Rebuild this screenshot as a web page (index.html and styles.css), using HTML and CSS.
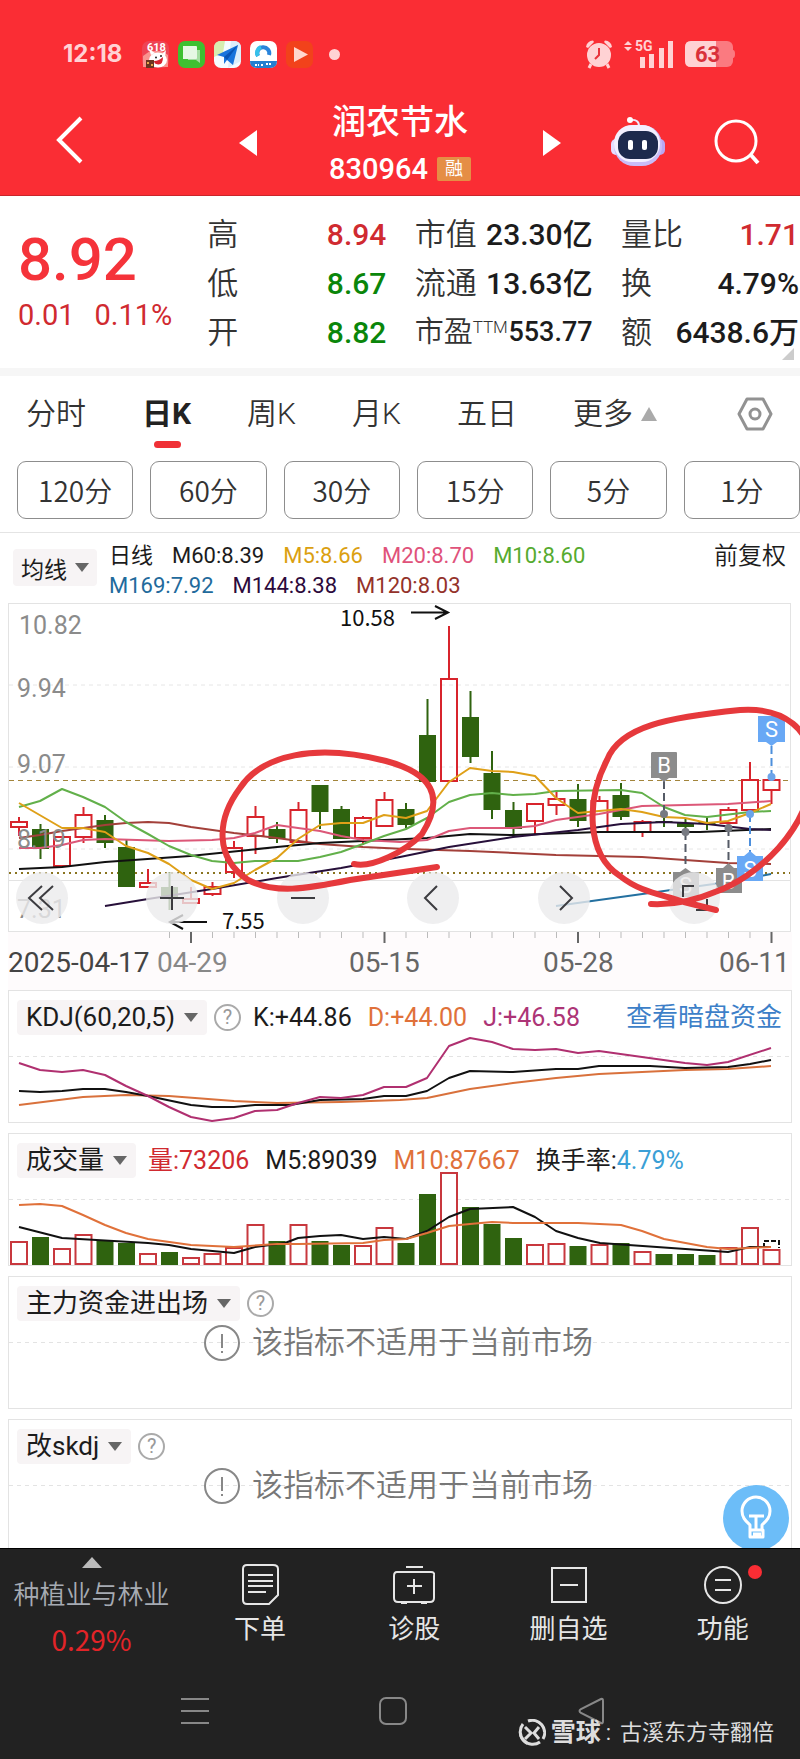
FILE: index.html
```html
<!DOCTYPE html>
<html lang="zh-CN">
<head>
<meta charset="utf-8">
<meta name="viewport" content="width=device-width, initial-scale=1">
<title>润农节水 830964</title>
<link rel="stylesheet" href="styles.css">
</head>
<body>
<header class="top">
  <div class="status">
    <time class="clock">12:18</time>
    <div class="apps">
      <svg viewBox="0 0 27 27"><rect width="27" height="27" rx="7" fill="#ee4454"/><path d="M1 15L8 10L20 10L26 14V26H1Z" fill="#f9938f"/><text x="5" y="10" font-size="11" font-weight="700" fill="#fff" class="num">618</text><ellipse cx="16" cy="19" rx="9" ry="7.500" fill="#fff"/><path d="M9 14L7 8L13 12M20 13L24 9L23 16" fill="#fff"/><path d="M12 20Q17 20 21 16Q21 24 16 23.500Q12 23 12 20" fill="#d8232f"/><circle cx="14" cy="16.500" r="1" fill="#222"/><circle cx="19" cy="15" r="1" fill="#222"/><rect x="4" y="19" width="8" height="8" fill="#6b3522"/><path d="M5 21h2v2H5zM9 23h2v2H9z" fill="#e8a64b"/></svg>
      <svg viewBox="0 0 27 27"><rect width="27" height="27" rx="7" fill="#3ec031"/><path d="M10 9H22V22L18 19H10Z" fill="#a4dda0"/><path d="M5 5H18Q19 5 19 6V17Q19 18 18 18H5Z" fill="#e6f8e4"/></svg>
      <svg viewBox="0 0 27 27"><rect width="27" height="27" rx="7" fill="#f5fbff"/><path d="M7 0H11L9 12L0 16V7Q0 0 7 0" fill="#d7edb0"/><path d="M17 0H20Q27 0 27 7V20L14 27" fill="#dceefb"/><path d="M3 14L24 4L19 24L13 19L10 23V16Z" fill="#1874dc"/><path d="M10 16L24 4L13 19Z" fill="#0754b5"/></svg>
      <svg viewBox="0 0 27 27"><rect width="27" height="27" rx="7" fill="#fff"/><path d="M8 15A6 6 0 1 1 19 14" fill="none" stroke="#2a84db" stroke-width="4"/><path d="M8 15A6 6 0 0 1 11 6" fill="none" stroke="#35c1ea" stroke-width="4"/><path d="M0 20H27Q27 27 20 27H7Q0 27 0 20" fill="#237fd0"/><path d="M5 24H9M11 24H14M16 23H22" stroke="#fff" stroke-width="2" stroke-dasharray="2 1"/></svg>
      <svg viewBox="0 0 27 27"><rect width="27" height="27" rx="7" fill="#f2421b"/><path d="M8 6V21L22 13.500Z" fill="#ffd9ce"/></svg>
      <span class="more-dot"></span>
    </div>
    <div class="signals">
      <svg width="28" height="30" viewBox="0 0 28 30" fill="#ffd2d4"><circle cx="14" cy="16" r="12"/><path d="M1 8Q2 2 8 1.500L9 3L3 9ZM27 8Q26 2 20 1.500L19 3L25 9Z"/><path d="M6 25L4 29M22 25L24 29" stroke="#ffd2d4" stroke-width="3"/><path d="M14 9V16L10 20" fill="none" stroke="#e9323b" stroke-width="2"/></svg>
      <svg width="50" height="30" viewBox="0 0 50 30" fill="#ffd2d4"><path d="M0 6L4 2L8 6ZM0 8H8L4 12Z"/><text x="11" y="12" class="num" font-size="14" font-weight="700">5G</text><path d="M16 18H21V29H16ZM25 15H30V29H25ZM35 9H40V29H35ZM44 2H49V29H44Z"/></svg>
      <svg width="50" height="28" viewBox="0 0 50 28"><rect width="48" height="26" y="1" rx="6" fill="#fb7a80"/><path d="M6 1H31V27H6Q0 27 0 21V7Q0 1 6 1" fill="#ffd2d4"/><path d="M48 10Q50 10 50 14Q50 18 48 18Z" fill="#fb7a80"/><text x="10" y="22" class="num" font-size="22" font-weight="700" fill="#d9303a">63</text></svg>
    </div>
  </div>
  <div class="titlebar">
    <button class="icon-btn back" aria-label="返回"><svg width="27" height="48" viewBox="0 0 27 48"><path d="M25 2L3 24L25 46" fill="none" stroke="#fff" stroke-width="4"/></svg></button>
    <div class="switcher">
      <button class="icon-btn" aria-label="上一只"><svg width="18" height="28" viewBox="0 0 18 28"><path d="M18 1V27L0 14Z" fill="#fff"/></svg></button>
      <div class="stock"><h1>润农节水</h1><p><span>830964</span><em>融</em></p></div>
      <button class="icon-btn" aria-label="下一只"><svg width="18" height="28" viewBox="0 0 18 28"><path d="M0 1V27L18 14Z" fill="#fff"/></svg></button>
    </div>
    <div class="actions">
      <button class="icon-btn" aria-label="智能助手"><svg width="54" height="50" viewBox="0 0 54 50"><path d="M19 3Q28 2 28 9" fill="none" stroke="#eeeaff" stroke-width="2"/><circle cx="19" cy="3" r="3" fill="#fff"/><rect x="0" y="22" width="10" height="16" rx="5" fill="#e5ddff"/><rect x="44" y="22" width="10" height="16" rx="5" fill="#b9a7f3"/><rect x="3" y="8" width="48" height="41" rx="20" fill="#c9bcf7"/><rect x="3" y="8" width="46" height="37" rx="18" fill="#f3f0ff"/><rect x="7" y="14" width="40" height="28" rx="12" fill="#1d2a4d"/><rect x="17" y="23" width="5" height="10" rx="2" fill="#fff"/><rect x="31" y="23" width="5" height="10" rx="2" fill="#fff"/></svg></button>
      <button class="icon-btn" aria-label="搜索"><svg width="46" height="46" viewBox="0 0 46 46" fill="none" stroke="#fff" stroke-width="3"><circle cx="22" cy="22" r="20"/><path d="M36 35L44 44" stroke-width="4"/></svg></button>
    </div>
  </div>
</header>

<section class="quote">
  <div class="price"><strong>8.92</strong><p><span>0.01</span><span>0.11%</span></p></div>
  <dl>
    <div><dt>高</dt><dd class="up">8.94</dd></div>
    <div><dt>低</dt><dd class="down">8.67</dd></div>
    <div><dt>开</dt><dd class="down">8.82</dd></div>
  </dl>
  <dl>
    <div><dt>市值</dt><dd>23.30亿</dd></div>
    <div><dt>流通</dt><dd>13.63亿</dd></div>
    <div><dt class="tight">市盈<small>TTM</small></dt><dd class="tight">553.77</dd></div>
  </dl>
  <dl>
    <div><dt>量比</dt><dd class="up">1.71</dd></div>
    <div><dt>换</dt><dd>4.79%</dd></div>
    <div><dt>额</dt><dd>6438.6万</dd></div>
  </dl>
  <span class="corner"></span>
</section>

<nav class="tabs">
  <button>分时</button><button class="active">日K</button><button>周K</button><button>月K</button><button>五日</button>
  <button>更多<svg width="16" height="14" viewBox="0 0 16 14"><path d="M0 14L8 0L16 14Z" fill="#aaa"/></svg></button>
  <button class="gear" aria-label="设置"><svg width="36" height="34" viewBox="0 0 36 34" fill="none" stroke="#929292" stroke-width="3" stroke-linejoin="round"><path d="M10 2H26L34 17L26 32H10L2 17Z"/><circle cx="18" cy="17" r="5"/></svg></button>
</nav>
<nav class="periods">
  <button>120分</button><button>60分</button><button>30分</button><button>15分</button><button>5分</button><button>1分</button>
</nav>

<section class="legend">
  <button class="pick">均线<i class="caret"></i></button>
  <div class="averages">
    <p><span>日线</span><span>M60:8.39</span><span class="c-m5">M5:8.66</span><span class="c-m20">M20:8.70</span><span class="c-m10">M10:8.60</span></p>
    <p><span class="c-m169">M169:7.92</span><span class="c-m144">M144:8.38</span><span class="c-m120">M120:8.03</span></p>
  </div>
  <button class="adjust">前复权</button>
</section>

<section class="kline">
  <svg class="plot" viewBox="0 603 800 387" role="img" aria-label="日K线图">
    <rect x="8" y="932" width="784" height="58" fill="#fefbfc"/>
    <g fill="none" stroke="#e3e3e3"><rect x="8.500" y="603.500" width="782" height="328"/><path d="M8 880.500H791"/></g>
    <path d="M9 685H790M9 767H790M9 849H790" stroke="#e6e6e6" stroke-dasharray="4 4"/>
    <path d="M9 780.500H790" stroke="#a3853c" stroke-dasharray="5 4"/>
    <path d="M9 873H790" stroke="#8a7420" stroke-width="2" stroke-dasharray="2 4"/>
    <path id="ticks" stroke="#bbb"/>
    <path d="M191 932V943M384.500 932V943M578 932V943M771.500 932V943" stroke="#666" stroke-width="2"/>
    <g id="candles"></g>
    <g id="averages"></g>
    <g class="axis"><text x="19" y="634">10.82</text><text x="17" y="697">9.94</text><text x="17" y="773">9.07</text><text x="17" y="848">8.19</text><text x="17" y="918">7.31</text></g>
    <g class="note"><text x="340" y="626">10.58</text><text x="222" y="929">7.55</text></g>
    <path d="M411 612.500H448M435 606L448 612.500L435 619M207 922H171M183 915L170 922L183 929" fill="none" stroke="#111" stroke-width="2"/>
    <g class="dates"><text x="8" y="972" fill="#444">2025-04-17</text><text x="157" y="972" fill="#888">04-29</text><text x="349" y="972">05-15</text><text x="543" y="972">05-28</text><text x="719" y="972">06-11</text></g>
    <g fill="none" stroke="#555b66" stroke-width="2" stroke-dasharray="8 4"><path d="M664 781V812M685.500 832V868M728.500 828V863"/><path d="M771.500 746V774M750 814V852" stroke="#4d8fdc"/></g>
    <g fill="#777a82"><circle cx="664" cy="814" r="4"/><circle cx="685.500" cy="832" r="4"/><circle cx="728.500" cy="828" r="4"/></g>
    <g fill="#6ba4ea"><circle cx="771.500" cy="777" r="4"/><circle cx="750" cy="814" r="4"/></g>
    <path d="M652 752H676Q677 752 677 753V778H669L664 782L659 778H651V753Z" fill="#8c8c8c"/>
    <path d="M673 872H680L685.500 868L691 872H699V897H673Z" fill="#8c8c8c"/>
    <path d="M716 868H723L728.500 863L734 868H742V893H716Z" fill="#8c8c8c"/>
    <path d="M737 856H744L750 851L756 856H763V881H737Z" fill="#68a8f5"/>
    <path d="M758 716H785V742H777L771.500 746L766 742H758Z" fill="#68a8f5"/>
    <g class="mark"><text x="664" y="773">B</text><text x="685.500" y="893">S</text><text x="728.500" y="889">B</text><text x="750" y="877">S</text><text x="771.500" y="737">S</text></g>
  </svg>
  <div class="controls">
    <button aria-label="最早"><svg viewBox="0 0 52 52"><path d="M26 14L13 26L26 38M37 14L24 26L37 38"/></svg></button>
    <button aria-label="放大"><svg viewBox="0 0 52 52"><path d="M14 26H38M26 14V38"/></svg></button>
    <button aria-label="缩小"><svg viewBox="0 0 52 52"><path d="M14 26H38"/></svg></button>
    <button aria-label="左移"><svg viewBox="0 0 52 52"><path d="M30 14L18 26L30 38"/></svg></button>
    <button aria-label="右移"><svg viewBox="0 0 52 52"><path d="M22 14L34 26L22 38"/></svg></button>
    <button aria-label="全屏"><svg viewBox="0 0 52 52"><path d="M15 25V14H26M39 27V38H28"/></svg></button>
  </div>
  <svg class="plot ink" viewBox="0 603 800 387" aria-hidden="true" fill="none" stroke="#e6393c" stroke-width="6" stroke-linecap="round">
    <path d="M354 864C372 868 405 852 422 834C446 796 431 773 386 761C315 743 262 755 240 788C216 820 215 858 248 880C275 894 305 889 350 880L437 867"/>
    <path d="M716 910L684 902C660 894 640 892 620 876C586 854 586 800 607 760C620 726 670 717 740 710C785 707 812 730 812 768C812 830 755 878 715 892C694 901 674 905 651 904"/>
  </svg>
</section>

<main class="panels">
  <section class="panel">
    <svg class="plot" viewBox="9 991 782 131" role="img" aria-label="KDJ指标"><path d="M9 1056.500H790" class="mid"/><g id="kdj"></g></svg>
    <div class="head"><button class="pick">KDJ(60,20,5)<i class="caret"></i></button><button class="help" aria-label="说明">?</button>
      <p class="vals"><span>K:+44.86</span><span class="c-or">D:+44.00</span><span class="c-j">J:+46.58</span></p><a href="#dark">查看暗盘资金</a></div>
  </section>
  <section class="panel">
    <svg class="plot" viewBox="9 1134 782 131" role="img" aria-label="成交量"><path d="M9 1199.500H790" class="mid"/><g id="volume"></g><path d="M764 1248V1241H779V1248" fill="none" stroke="#111" stroke-width="2" stroke-dasharray="5 2"/><g id="volavg"></g></svg>
    <div class="head"><button class="pick">成交量<i class="caret"></i></button>
      <p class="vals"><span class="up">量:73206</span><span>M5:89039</span><span class="c-or">M10:87667</span><span>换手率:<b>4.79%</b></span></p></div>
  </section>
  <section class="panel">
    <svg class="plot" viewBox="9 1277 782 131"><path d="M9 1342.500H790" class="mid"/></svg>
    <div class="head"><button class="pick">主力资金进出场<i class="caret"></i></button><button class="help" aria-label="说明">?</button></div>
    <p class="notice"><svg width="36" height="36" viewBox="0 0 36 36"><circle cx="18" cy="18" r="17"/><path d="M18 9V23M18 26V28"/></svg><span>该指标不适用于当前市场</span></p>
  </section>
  <section class="panel last">
    <svg class="plot" viewBox="9 1420 782 128"><path d="M9 1485.500H790" class="mid"/></svg>
    <div class="head"><button class="pick">改skdj<i class="caret"></i></button><button class="help" aria-label="说明">?</button></div>
    <p class="notice"><svg width="36" height="36" viewBox="0 0 36 36"><circle cx="18" cy="18" r="17"/><path d="M18 9V23M18 26V28"/></svg><span>该指标不适用于当前市场</span></p>
  </section>
  <button class="fab" aria-label="提示"><svg width="66" height="66" viewBox="0 0 66 66" fill="none" stroke="#fff" stroke-width="3" stroke-linejoin="round"><path d="M27 45V40C23 36 19 33 19 26A14 14 0 0 1 47 26C47 33 43 36 39 40V45M26 31H41M33 31V45M27 45H40V52H27ZM30 49H38"/></svg></button>
</main>

<footer class="bottom">
  <nav class="toolbar">
    <button class="sector"><svg width="20" height="11" viewBox="0 0 20 11"><path d="M0 11L10 0L20 11Z"/></svg><span>种植业与林业</span><b>0.29%</b></button>
    <button><svg width="42" height="42" viewBox="0 0 42 42"><path d="M8 1H34Q39 1 39 5V31L30 40H8Q4 40 4 36V5Q4 1 8 1ZM9 11H34M9 17H34M9 22H34M9 28H27"/></svg>下单</button>
    <button><svg width="42" height="42" viewBox="0 0 42 42"><path d="M13 3H30M4 8H38Q42 8 41 12V34Q41 38 37 38H5Q1 38 1 34V12Q1 8 4 8ZM21 15V30M14 22H29M8 39H14M28 39H34"/></svg>诊股</button>
    <button><svg width="42" height="42" viewBox="0 0 42 42"><path d="M4 4H38V38H4ZM12 21H30"/></svg>删自选</button>
    <button class="dotted"><svg width="42" height="42" viewBox="0 0 42 42"><circle cx="21" cy="21" r="18"/><path d="M13 16H29M13 26H29"/></svg>功能</button>
  </nav>
  <nav class="system">
    <button aria-label="最近任务"><svg width="28" height="28" viewBox="0 0 28 28"><path d="M0 2H28M0 14H28M0 26H28"/></svg></button>
    <button aria-label="主屏幕"><svg width="28" height="28" viewBox="0 0 28 28"><rect x="1" y="1" width="26" height="26" rx="6"/></svg></button>
    <button aria-label="返回"><svg width="28" height="28" viewBox="0 0 28 28"><path d="M24 2L4 12Q1 14 4 16L24 26Q26 27 26 24V4Q26 1 24 2Z"/></svg></button>
  </nav>
  <p class="credit"><svg width="28" height="28" viewBox="0 0 28 28" fill="none" stroke="#ddd" stroke-width="3"><path d="M10 2A12.500 12.500 0 0 1 25 20M22 23A12.500 12.500 0 0 1 5 5"/><path d="M2 12Q1 20 9 25M18 2Q26 5 26 13" stroke-width="2"/><path d="M7 8L13 14L7 20M21 8L16 14L21 20"/></svg><b>雪球</b><i>:</i><span>古溪东方寺翻倍</span></p>
</footer>
<script src="chart.js"></script>
</body>
</html>
```

FILE: styles.css
```css
* { box-sizing: border-box; }
body { margin: 0; background: #fff; color: #1c1c1c; font-family: Roboto, "Noto Sans CJK SC", sans-serif; }
h1, p, dl, dd { margin: 0; }
button { margin: 0; padding: 0; border: 0; background: none; color: inherit; font: inherit; cursor: pointer; }
svg { display: block; }
.num { font-family: Roboto, sans-serif; }
.up { color: #d02a30; }
.down { color: #0a860a; }

.top { background: #fa2d34; color: #fff; border-bottom: 1px solid #c9252b; }
.status { display: flex; align-items: center; height: 82px; padding: 26px 65px 0 63px; }
.clock { font: 700 24px/28px Inter, sans-serif; color: #ffd2d4; width: 79px; }
.apps { display: flex; align-items: center; gap: 9px; }
.apps svg { width: 27px; height: 27px; }
.more-dot { width: 11px; height: 11px; margin-left: 7px; border-radius: 50%; background: #ffd2d4; }
.signals { display: flex; align-items: center; gap: 11px; margin-left: auto; }
.titlebar { display: grid; grid-template-columns: 1fr 322px 1fr; height: 113px; padding-top: 3px; align-items: center; }
.icon-btn { display: flex; align-items: center; }
.back { padding-left: 56px; }
.switcher { display: flex; justify-content: space-between; align-items: center; }
.switcher .icon-btn { padding-top: 5px; }
.stock { padding-top: 12px; }
.stock h1 { font-size: 34px; line-height: 46px; font-weight: 500; text-align: center; }
.stock p { display: flex; align-items: center; gap: 9px; font-size: 29px; line-height: 48px; font-weight: 500; }
.stock em { padding: 0 8px; background: #e58e45; border-radius: 2px; font-style: normal; font-weight: 400; font-size: 18px; line-height: 24px; }
.actions { display: flex; justify-content: space-between; align-items: center; padding: 4px 40px 0 50px; }

.quote { position: relative; display: grid; grid-template-columns: 161px 179px 178px 178px; justify-content: space-between; height: 180px; padding: 14px 1px 0 18px; border-bottom: 8px solid #f6f6f6; }
.price strong { display: block; padding-top: 14px; font-size: 60px; line-height: 72px; font-weight: 500; color: #f5333a; }
.price p { display: flex; gap: 20px; font-size: 29px; line-height: 38px; color: #d02a30; }
.quote dl > div { display: flex; justify-content: space-between; height: 49px; font-size: 30px; line-height: 49px; white-space: nowrap; }
.quote dt { font-weight: 350; color: #333; font-size: 31px; }
.quote dd { font-weight: 500; }
.quote dt.tight { font-size: 29px; }
.quote dd.tight { font-size: 27px; }
.quote small { display: inline-block; font-size: 17px; line-height: 20px; vertical-align: top; padding-top: 9px; }
.corner { position: absolute; right: 6px; bottom: 8px; border: 6px solid; border-color: transparent #ccc #ccc transparent; }

.tabs { display: flex; align-items: center; gap: 56px; height: 77px; padding: 0 27px 2px 26px; font-size: 30px; font-weight: 350; color: #333; }
.tabs button { display: flex; align-items: center; gap: 8px; position: relative; line-height: 44px; white-space: nowrap; }
.tabs .active { font-weight: 700; color: #222; }
.tabs .active::after { content: ""; position: absolute; left: 50%; bottom: -12px; width: 27px; height: 7px; margin-left: -13px; border-radius: 4px; background: #f03036; }
.tabs .gear { margin-left: auto; }
.periods { display: grid; grid-template-columns: repeat(6, 1fr); gap: 17px; padding: 8px 0 13px 17px; border-bottom: 1px solid #e4e4e4; }
.periods button { height: 58px; border: 1px solid #8d8d8d; border-radius: 9px; font: 350 28px/40px "Noto Sans CJK SC", sans-serif; color: #333; }

.pick { display: flex; align-items: center; gap: 9px; height: 35px; padding: 0 9px; border-radius: 4px; background: #f7f4f5; color: #1c1c1c; font-size: 26px; white-space: nowrap; }
.caret { border: 7px solid transparent; border-top: 9px solid #666; border-bottom: 0; }
.legend { display: flex; height: 70px; padding: 8px 14px 0 13px; }
.legend .pick { height: 37px; margin: 8px 12px 0 0; padding: 0 8px; gap: 8px; font-size: 23px; }
.averages p { display: flex; gap: 19px; font-size: 22px; line-height: 30px; font-weight: 400; white-space: nowrap; }
.adjust { margin-left: auto; height: 30px; font-size: 24px; line-height: 30px; font-weight: 350; }
.c-m5 { color: #dba010; } .c-m20 { color: #e0527a; } .c-m10 { color: #56ab2f; }
.c-m169 { color: #226a9c; } .c-m144 { color: #2c0a3c; } .c-m120 { color: #94322a; }

.kline { position: relative; }
.plot { width: 100%; height: auto; }
.axis text { font-size: 25px; fill: #8b8b8b; }
.note text { font-family: "Noto Sans CJK SC", sans-serif; font-size: 22px; fill: #111; }
.dates text { font-size: 28px; }
.dates { fill: #666; }
.mark text { font-size: 22px; fill: #fff; text-anchor: middle; }
.controls { position: absolute; left: 2%; right: 10%; bottom: 66px; display: flex; justify-content: space-between; }
.controls button { width: 52px; height: 52px; border-radius: 50%; background: rgba(235, 235, 236, 0.8); }
.controls svg { fill: none; stroke: #3c3c40; stroke-width: 2; }
.ink { position: absolute; left: 0; top: 0; pointer-events: none; }

.panels { position: relative; display: grid; gap: 10px; padding: 0 8px; }
.panel { display: grid; border: 1px solid #e3e3e3; }
.panel > * { grid-area: 1 / 1; min-width: 0; }
.panel.last { border-bottom: 0; }
.panel.last .notice { padding-top: 4px; }
.mid { stroke: #e3e3e3; stroke-dasharray: 4 4; }
.head { display: flex; align-items: center; align-self: start; padding: 9px 9px 0 8px; font-size: 25px; line-height: 35px; }
.help { width: 27px; height: 27px; margin-left: 7px; border: 2px solid #aaa; border-radius: 50%; color: #999; font-size: 20px; line-height: 23px; }
.vals { display: flex; gap: 16px; margin-left: 12px; white-space: nowrap; }
.vals b { font-weight: 400; color: #3b9fd6; }
.head a { margin-left: auto; color: #3d7fc8; font-size: 26px; text-decoration: none; }
.c-or { color: #e0713a; } .c-j { color: #ad3476; }
.notice { display: flex; align-items: center; align-self: center; gap: 12px; padding-left: 195px; color: #777; font-size: 31px; line-height: 36px; font-weight: 350; }
.notice svg { fill: none; stroke: #888; stroke-width: 2; }
.fab { position: absolute; right: 11px; bottom: -3px; width: 66px; height: 66px; border-radius: 50%; background: #6cbdf8; }

.bottom { position: relative; background: #222; color: #e6e6e6; height: 211px; border-top: 1px solid #000; }
.toolbar { display: grid; grid-template-columns: 183px repeat(4, 1fr); height: 110px; }
.toolbar button { display: flex; flex-direction: column; align-items: center; gap: 4px; padding-top: 15px; font-size: 26px; line-height: 38px; position: relative; }
.toolbar svg { flex: none; fill: none; stroke: #e6e6e6; stroke-width: 2; }
.toolbar .sector { padding-top: 8px; gap: 8px; font-weight: 350; color: #a6abb3; }
.toolbar .sector svg { fill: #bbb; stroke: none; }
.toolbar .sector b { font: 400 28px/34px "Noto Sans CJK SC", sans-serif; color: #e32428; }
.dotted::after { content: ""; position: absolute; left: 50%; top: 16px; width: 14px; height: 14px; margin-left: 25px; border-radius: 50%; background: #fa2d34; }
.system { display: flex; justify-content: space-between; padding: 38px 195px 0 181px; }
.system svg { fill: none; stroke: #888; stroke-width: 2; }
.credit { position: absolute; right: 26px; bottom: 8px; display: flex; align-items: center; font-size: 22px; line-height: 36px; color: #ddd; }
.credit b { margin-left: 5px; font-size: 25px; font-weight: 700; }
.credit i { margin: 0 9px 0 5px; font-style: normal; }
```

FILE: chart.js
```js
const NS = 'http://www.w3.org/2000/svg';
const UP = '#d8242c', DOWN = '#2f630f';
const X = i => 19 + i * 21.5;

function add(id, tag, attrs) {
  const el = document.createElementNS(NS, tag);
  for (const k in attrs) el.setAttribute(k, attrs[k]);
  document.getElementById(id).appendChild(el);
}
function line(id, color, points, width = 2) {
  add(id, 'polyline', { points, fill: 'none', stroke: color, 'stroke-width': width, 'stroke-linejoin': 'round' });
}

// [rising, wick top, body top, body bottom, wick bottom]
const candles = [
  [1,817,822,827,836],[0,824,829,849,859],[1,836,837,866,866],[1,807,815,837,843],[0,815,820,843,848],[0,840,847,887,887],
  [1,869,883,887,887],[0,872,887,897,910],[1,887,899,903,903],[1,882,887,894,896],[1,841,848,872,878],[1,806,817,836,854],
  [0,822,829,839,843],[1,802,810,842,842],[0,785,785,812,829],[0,806,809,839,839],[1,816,818,838,845],[1,792,800,826,826],
  [0,803,809,825,828],[0,699,735,782,782],[1,626,679,781,781],[0,691,717,757,763],[0,751,773,810,819],[0,802,810,829,837],
  [1,804,804,821,835],[1,792,799,805,815],[0,784,799,821,827],[1,796,801,832,832],[0,783,795,817,820],[1,820,822,832,837],
  [0,815,821,823,827],[0,819,823,827,832],[0,816,822,824,830],[1,807,810,823,828],[1,762,780,810,810],[1,780,780,790,804]
];
candles.forEach(([up, hi, top, bot, lo], i) => {
  const x = X(i), c = up ? UP : DOWN;
  add('candles', 'path', { d: `M${x} ${hi}V${top}M${x} ${bot}V${lo}`, stroke: c, 'stroke-width': 2 });
  add('candles', 'rect', up
    ? { x: x - 8, y: top, width: 16, height: bot - top, fill: 'none', stroke: c, 'stroke-width': 2 }
    : { x: x - 8.5, y: top, width: 17, height: bot - top, fill: c });
});

line('averages', '#a3403a', '19,838 40,835 62,831 105,825 126,823 148,822 169,823 191,827 234,833 277,838 320,844 363,847 406,849 470,851 556,855 642,857 685,860 728,863 771,864');
line('averages', '#111', '19,869 62,867 105,862 190,856 277,847 320,843 384,840 427,838 470,834 513,835 600,832 700,832 771,829');
line('averages', '#27103a', '105,906 148,899 212,889 277,878 341,868 400,857 449,847 513,837 578,830 621,824 664,822 707,824 750,829 771,830');
line('averages', '#dc5878', '19,848 40,848 62,845 83,840 105,839 169,841 212,840 234,838 255,833 277,825 298,828 320,831 341,836 363,840 400,842 427,840 449,831 470,828 513,828 535,826 556,820 599,814 642,806 685,805 728,804 771,801');
line('averages', '#62b04a', '19,807 40,801 62,789 83,797 105,807 126,822 148,834 169,846 191,855 212,861 234,863 255,861 298,861 320,857 341,852 363,844 384,836 406,829 427,818 449,802 470,795 492,793 513,795 535,794 556,791 621,790 642,793 664,807 685,815 707,817 750,812 771,811');
line('averages', '#dfa018', '19,803 62,828 83,828 105,832 126,846 148,853 169,864 191,880 212,889 234,883 255,870 277,858 298,839 320,825 341,823 363,823 384,815 406,818 427,811 449,782 470,768 492,771 513,772 535,776 556,798 578,813 599,811 621,809 642,812 664,817 685,818 707,823 728,821 750,813 771,804');
line('averages', '#2470a0', '556,906 599,900 664,891 728,882 771,874');

let ticks = '';
for (let i = 7; i < 36; i++) ticks += `M${X(i)} 932V938`;
document.getElementById('ticks').setAttribute('d', ticks);

line('kdj', '#d9713c', '19,1105 83,1097 126,1095 169,1096 234,1101 277,1103 341,1102 400,1100 427,1098 470,1089 513,1083 556,1078 599,1074 685,1070 728,1069 771,1066');
line('kdj', '#111', '19,1091 40,1092 62,1091 83,1089 105,1089 126,1092 148,1096 191,1105 212,1107 234,1107 255,1105 290,1105 320,1100 363,1099 384,1096 406,1096 427,1091 449,1078 470,1071 513,1072 556,1069 578,1069 599,1066 650,1066 685,1068 728,1067 750,1064 771,1060');
line('kdj', '#b03070', '19,1063 40,1070 62,1072 83,1070 105,1075 126,1086 148,1096 169,1107 191,1117 212,1121 234,1118 255,1111 277,1110 298,1103 320,1097 341,1098 363,1095 384,1087 406,1087 427,1078 449,1046 470,1038 492,1042 513,1049 535,1050 556,1049 578,1053 599,1051 642,1057 685,1063 707,1065 728,1062 771,1048');

const bars = [1242,1237,1249,1235,1241,1243,1254,1252,1258,1254,1248,1225,1241,1225,1241,1245,1246,1228,1243,1194,1173,1207,1224,1238,1245,1244,1246,1245,1243,1252,1254,1254,1255,1248,1228,1250];
bars.forEach((y, i) => {
  const x = X(i);
  add('volume', 'rect', candles[i][0]
    ? { x: x - 8, y, width: 16, height: 1264 - y, fill: '#fff', stroke: '#c8383e', 'stroke-width': 2 }
    : { x: x - 8.5, y, width: 17, height: 1265 - y, fill: DOWN });
});
line('volavg', '#111', '19,1227 62,1238 148,1243 169,1245 191,1249 234,1253 255,1247 285,1243 298,1238 320,1236 341,1235 363,1239 384,1237 406,1239 427,1231 449,1217 470,1209 513,1207 535,1217 556,1231 578,1238 600,1243 728,1252 750,1247 771,1247');
line('volavg', '#e0713a', '19,1205 40,1204 62,1206 83,1215 105,1225 126,1233 148,1239 191,1245 234,1247 277,1244 298,1244 363,1243 384,1240 406,1239 427,1233 449,1226 470,1224 492,1222 513,1223 578,1223 621,1225 642,1231 664,1239 707,1247 728,1249 771,1247');
```
